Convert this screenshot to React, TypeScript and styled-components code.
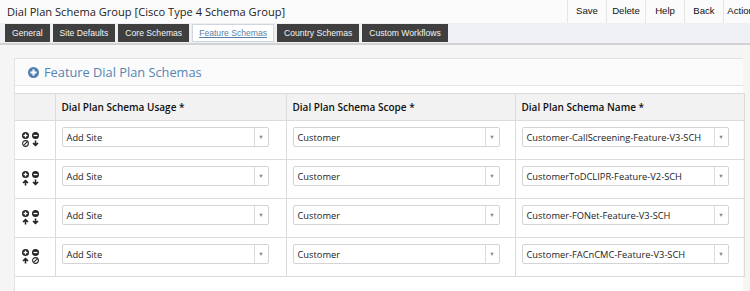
import { FunctionComponent } from "react";
import styled, { createGlobalStyle } from "styled-components";

type Move = "up" | "down" | "none";

type RowType = {
  usage: string;
  scope: string;
  name: string;
  left: Move;
  right: Move;
};

const rows: RowType[] = [
  { usage: "Add Site", scope: "Customer", name: "Customer-CallScreening-Feature-V3-SCH", left: "none", right: "down" },
  { usage: "Add Site", scope: "Customer", name: "CustomerToDCLIPR-Feature-V2-SCH", left: "up", right: "down" },
  { usage: "Add Site", scope: "Customer", name: "Customer-FONet-Feature-V3-SCH", left: "up", right: "down" },
  { usage: "Add Site", scope: "Customer", name: "Customer-FACnCMC-Feature-V3-SCH", left: "up", right: "none" },
];

const tabs = ["General", "Site Defaults", "Core Schemas", "Feature Schemas", "Country Schemas", "Custom Workflows"];
const actions = ["Save", "Delete", "Help", "Back", "Actions"];

const GlobalStyle = createGlobalStyle`
  html, body {
    margin: 0;
    padding: 0;
    background: #f5f5f5;
    font-family: "Open Sans", "Liberation Sans", sans-serif;
    overflow: hidden;
  }
`;

const Page = styled.div`
  width: 750px;
  height: 291px;
  overflow: hidden;
  display: flex;
  flex-direction: column;
`;

const TopBar = styled.div`
  display: flex;
  height: 23px;
  background: #fbfbfb;
`;

const Title = styled.h1`
  flex: 1;
  margin: 0;
  padding: 4px 0 0 7px;
  font-size: 11.1px;
  font-weight: 400;
  color: #222;
  white-space: nowrap;
`;

const Actions = styled.div`
  display: flex;
  align-self: stretch;
  margin-right: -12px;
`;

const ActionButton = styled.div`
  width: 38px;
  border-left: 1px solid #e6e6e6;
  font-family: "Liberation Sans", Arial, sans-serif;
  font-size: 9.6px;
  color: #111;
  display: flex;
  align-items: center;
  justify-content: center;
  padding-bottom: 2px;
  white-space: nowrap;
`;

const TabBar = styled.div`
  display: flex;
  gap: 3px;
  padding: 1px 0 0 5px;
  background: #eef0f3;
  border-bottom: 2px solid #d2d2d2;
  box-sizing: border-box;
  height: 22px;
`;

const Tab = styled.div<{ $active?: boolean }>`
  height: 18px;
  padding: 0 6px;
  display: flex;
  align-items: center;
  font-family: "Liberation Sans", Arial, sans-serif;
  font-size: 8.6px;
  white-space: nowrap;
  box-sizing: border-box;
  background: ${(p) => (p.$active ? "#ffffff" : "#3f3f3f")};
  color: ${(p) => (p.$active ? "#5a7fa6" : "#f4f4f4")};
  border: 1px solid ${(p) => (p.$active ? "#cfd6de" : "#3f3f3f")};
  text-decoration: ${(p) => (p.$active ? "underline" : "none")};
`;

const Content = styled.div`
  flex: 1;
  padding: 13px 7px 0 14px;
`;

const Panel = styled.div`
  background: #ffffff;
  border: 1px solid #e2e2e2;
  border-right: none;
  height: 100%;
`;

const PanelHeader = styled.div`
  display: flex;
  align-items: center;
  gap: 5px;
  height: 26px;
  padding-left: 13px;
  background: #fbfbfb;
  border-bottom: 1px solid #e4e4e4;
  color: #5585b5;
  font-size: 12.8px;
`;

const PanelBody = styled.div`
  padding-top: 7px;
`;

const Table = styled.table`
  width: 729px;
  border-collapse: collapse;
  table-layout: fixed;
  font-size: 9.3px;
  color: #222;

  th,
  td {
    border: 1px solid #dcdcdc;
    padding: 0 0 0 6px;
    text-align: left;
  }

  th {
    height: 26px;
    background: #f2f2f2;
    font-weight: 600;
    font-size: 10px;
    color: #111;
  }

  tr > :first-child {
    border-left: none;
  }

  td {
    height: 39px;
    box-sizing: border-box;
    vertical-align: top;
    padding-top: 6px;
  }
`;

const ControlCell = styled.td`
  && {
    padding: 11px 0 0 7px;
  }
`;

const Controls = styled.div`
  display: grid;
  grid-template-columns: 7px 7px;
  grid-auto-rows: 7px;
  column-gap: 3px;
  row-gap: 1px;

  svg {
    display: block;
  }
`;

const Select = styled.div`
  width: 207px;
  height: 20px;
  display: flex;
  border: 1px solid #d4d4d4;
  border-radius: 2px;
  box-sizing: border-box;
  background: #fff;
`;

const SelectText = styled.div`
  flex: 1;
  display: flex;
  align-items: center;
  padding-left: 4px;
  white-space: nowrap;
  overflow: hidden;
  color: #222;
`;

const SelectArrow = styled.div`
  width: 13px;
  border-left: 1px solid #dcdcdc;
  display: flex;
  align-items: center;
  justify-content: center;
  color: #888;
  font-size: 5.5px;
  padding-bottom: 1px;
`;

const PlusCircle: FunctionComponent<{ size: number; color: string }> = ({ size, color }) => (
  <svg width={size} height={size} viewBox="0 0 16 16">
    <circle cx="8" cy="8" r="8" fill={color} />
    <rect x="3.5" y="6.5" width="9" height="3" fill="#fff" />
    <rect x="6.5" y="3.5" width="3" height="9" fill="#fff" />
  </svg>
);

const MinusCircle = () => (
  <svg width={7} height={7} viewBox="0 0 16 16">
    <circle cx="8" cy="8" r="8" fill="#222" />
    <rect x="3.5" y="6.5" width="9" height="3" fill="#fff" />
  </svg>
);

const Ban = () => (
  <svg width={7} height={7} viewBox="0 0 16 16">
    <circle cx="8" cy="8" r="6.6" fill="none" stroke="#222" strokeWidth="2.4" />
    <line x1="3.6" y1="12.4" x2="12.4" y2="3.6" stroke="#222" strokeWidth="2.4" />
  </svg>
);

const Arrow: FunctionComponent<{ up?: boolean }> = ({ up }) => (
  <svg width={7} height={7} viewBox="0 0 16 16">
    <path
      d="M8 1 L15 8 L12.5 10.5 L9.8 7.8 V15 H6.2 V7.8 L3.5 10.5 L1 8 Z"
      fill="#222"
      transform={up ? undefined : "rotate(180 8 8)"}
    />
  </svg>
);

const MoveIcon: FunctionComponent<{ move: Move; up?: boolean }> = ({ move, up }) =>
  move === "none" ? <Ban /> : <Arrow up={up} />;

const Dropdown: FunctionComponent<{ value: string }> = ({ value }) => (
  <Select>
    <SelectText>{value}</SelectText>
    <SelectArrow>▼</SelectArrow>
  </Select>
);

export default function App() {
  return (
    <Page>
      <GlobalStyle />
      <TopBar>
        <Title>Dial Plan Schema Group [Cisco Type 4 Schema Group]</Title>
        <Actions>
          {actions.map((a) => (
            <ActionButton key={a}>{a}</ActionButton>
          ))}
        </Actions>
      </TopBar>
      <TabBar>
        {tabs.map((t) => (
          <Tab key={t} $active={t === "Feature Schemas"}>
            {t}
          </Tab>
        ))}
      </TabBar>
      <Content>
        <Panel>
          <PanelHeader>
            <PlusCircle size={11} color="#4f7fb0" />
            Feature Dial Plan Schemas
          </PanelHeader>
          <PanelBody>
            <Table>
              <colgroup>
                <col style={{ width: 40 }} />
                <col style={{ width: 231 }} />
                <col style={{ width: 229 }} />
                <col style={{ width: 229 }} />
              </colgroup>
              <thead>
                <tr>
                  <th></th>
                  <th>Dial Plan Schema Usage *</th>
                  <th>Dial Plan Schema Scope *</th>
                  <th>Dial Plan Schema Name *</th>
                </tr>
              </thead>
              <tbody>
                {rows.map((r, i) => (
                  <tr key={i}>
                    <ControlCell>
                      <Controls>
                        <PlusCircle size={7} color="#222" />
                        <MinusCircle />
                        <MoveIcon move={r.left} up />
                        <MoveIcon move={r.right} />
                      </Controls>
                    </ControlCell>
                    <td>
                      <Dropdown value={r.usage} />
                    </td>
                    <td>
                      <Dropdown value={r.scope} />
                    </td>
                    <td>
                      <Dropdown value={r.name} />
                    </td>
                  </tr>
                ))}
              </tbody>
            </Table>
          </PanelBody>
        </Panel>
      </Content>
    </Page>
  );
}
